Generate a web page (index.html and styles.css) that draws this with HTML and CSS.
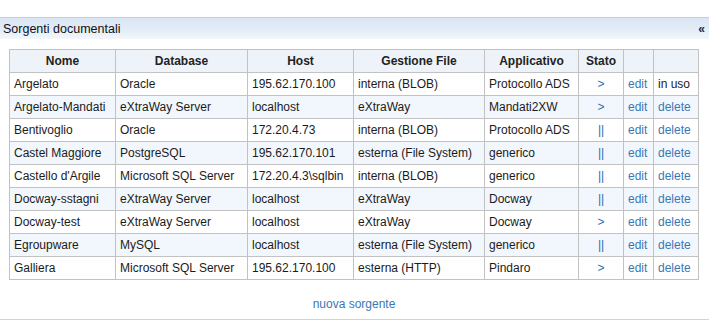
FILE: index.html
```html
<!DOCTYPE html>
<html>
<head>
<meta charset="utf-8">
<link rel="stylesheet" href="styles.css">
</head>
<body>
<div class="panel">
  <div class="panel-head">
    <span class="title">Sorgenti documentali</span>
    <span class="collapse">«</span>
  </div>
  <div class="panel-body">
    <table class="grid">
      <colgroup>
        <col class="c1"><col class="c2"><col class="c3"><col class="c4"><col class="c5"><col class="c6"><col class="c7"><col class="c8">
      </colgroup>
      <thead>
        <tr><th>Nome</th><th>Database</th><th>Host</th><th>Gestione File</th><th>Applicativo</th><th>Stato</th><th></th><th></th></tr>
      </thead>
      <tbody>
        <tr><td>Argelato</td><td>Oracle</td><td>195.62.170.100</td><td>interna (BLOB)</td><td>Protocollo ADS</td><td class="st">&gt;</td><td class="lk">edit</td><td>in uso</td></tr>
        <tr class="alt"><td>Argelato-Mandati</td><td>eXtraWay Server</td><td>localhost</td><td>eXtraWay</td><td>Mandati2XW</td><td class="st">&gt;</td><td class="lk">edit</td><td class="lk">delete</td></tr>
        <tr><td>Bentivoglio</td><td>Oracle</td><td>172.20.4.73</td><td>interna (BLOB)</td><td>Protocollo ADS</td><td class="st">||</td><td class="lk">edit</td><td class="lk">delete</td></tr>
        <tr class="alt"><td>Castel Maggiore</td><td>PostgreSQL</td><td>195.62.170.101</td><td>esterna (File System)</td><td>generico</td><td class="st">||</td><td class="lk">edit</td><td class="lk">delete</td></tr>
        <tr><td>Castello d'Argile</td><td>Microsoft SQL Server</td><td>172.20.4.3\sqlbin</td><td>interna (BLOB)</td><td>generico</td><td class="st">||</td><td class="lk">edit</td><td class="lk">delete</td></tr>
        <tr class="alt"><td>Docway-sstagni</td><td>eXtraWay Server</td><td>localhost</td><td>eXtraWay</td><td>Docway</td><td class="st">||</td><td class="lk">edit</td><td class="lk">delete</td></tr>
        <tr><td>Docway-test</td><td>eXtraWay Server</td><td>localhost</td><td>eXtraWay</td><td>Docway</td><td class="st">&gt;</td><td class="lk">edit</td><td class="lk">delete</td></tr>
        <tr class="alt"><td>Egroupware</td><td>MySQL</td><td>localhost</td><td>esterna (File System)</td><td>generico</td><td class="st">||</td><td class="lk">edit</td><td class="lk">delete</td></tr>
        <tr><td>Galliera</td><td>Microsoft SQL Server</td><td>195.62.170.100</td><td>esterna (HTTP)</td><td>Pindaro</td><td class="st">&gt;</td><td class="lk">edit</td><td class="lk">delete</td></tr>
      </tbody>
    </table>
    <div class="footer"><a class="new" href="#">nuova sorgente</a></div>
  </div>
</div>
</body>
</html>
```
FILE: styles.css
```css
html, body {
  margin: 0;
  padding: 0;
  background: #ffffff;
}
body {
  font-family: "Liberation Sans", Arial, sans-serif;
  font-size: 12px;
  color: #000;
  padding-top: 17px;
}
.panel {
  width: 709px;
}
.panel-head {
  height: 21px;
  border-top: 1px solid #bcd0e3;
  background: linear-gradient(to bottom, #dae6f4 0%, #e4edf8 60%, #f3f7fc 100%);
  display: flex;
  align-items: center;
  justify-content: space-between;
  padding: 0 4px 0 3px;
}
.title {
  font-size: 12.5px;
  color: #111;
}
.collapse {
  font-weight: bold;
  font-size: 12px;
  color: #1a2a40;
}
.panel-body {
  padding: 10px 0 0 9px;
  height: 281px;
  box-sizing: border-box;
  border-bottom: 1px solid #c3d7e6;
}
.grid {
  border-collapse: collapse;
  table-layout: fixed;
  width: 690px;
}
.c1 { width: 106px; }
.c2 { width: 132px; }
.c3 { width: 106px; }
.c4 { width: 131px; }
.c5 { width: 94px; }
.c6 { width: 45px; }
.c7 { width: 30px; }
.c8 { width: 45px; }
.grid th, .grid td {
  border: 1px solid #c2c2c2;
  height: 23px;
  padding: 0 0 0 4px;
  box-sizing: border-box;
  white-space: nowrap;
  overflow: hidden;
  color: #1b1b1b;
}
.grid th {
  background: #eef3fa;
  font-weight: bold;
  text-align: center;
  padding: 0;
  color: #222;
}
.grid tr.alt td {
  background: #f2f7fd;
}
.grid td.st {
  text-align: center;
  color: #2a6fb6;
  padding: 0;
}
.grid td.lk {
  color: #3a78b4;
}
.footer {
  display: flex;
  justify-content: center;
  padding-top: 17px;
  width: 690px;
}
.new {
  color: #3a78b4;
  text-decoration: none;
}
```
